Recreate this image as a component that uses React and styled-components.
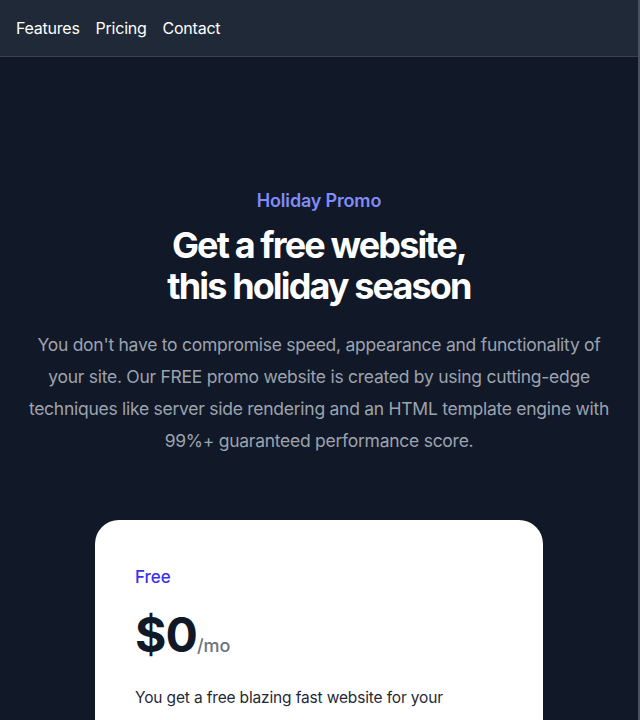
import React from 'react';
import styled, { createGlobalStyle } from 'styled-components';

const GlobalStyle = createGlobalStyle`
  html, body {
    margin: 0;
    padding: 0;
    background: #111827;
  }

  body {
    font-family: Inter, "Noto Sans", "Liberation Sans", sans-serif;
    -webkit-font-smoothing: antialiased;
  }

  * {
    box-sizing: border-box;
  }
`

const Page = styled.div`
  min-height: 100vh;
  background: #111827;
  border-right: 2px solid #4b5060;
`

const Nav = styled.nav`
  display: flex;
  align-items: center;
  gap: 16px;
  height: 57px;
  padding: 0 16px;
  background: #1f2937;
  border-bottom: 1px solid #374151;
`

const NavLink = styled.a`
  color: #fff;
  font-size: 16px;
  letter-spacing: -0.015em;
  text-decoration: none;
`

const Hero = styled.section`
  display: flex;
  flex-direction: column;
  align-items: center;
  padding: 130px 16px 0;
  text-align: center;
`

const Eyebrow = styled.p`
  margin: 0;
  color: #818cf8;
  font-size: 18px;
  line-height: 28px;
  font-weight: 600;
  letter-spacing: -0.01em;
`

const Heading = styled.h1`
  margin: 10px 0 0;
  color: #fff;
  font-size: 36px;
  line-height: 41px;
  font-weight: 700;
  letter-spacing: -0.052em;
`

const Lead = styled.p`
  max-width: 582px;
  margin: 22px 0 0;
  color: #9ca3af;
  font-size: 17.5px;
  line-height: 32px;
  letter-spacing: -0.015em;
`

const Card = styled.div`
  width: 448px;
  margin-top: 63px;
  padding: 43px 40px 40px;
  background: #fff;
  border-radius: 24px;
  text-align: left;
`

const Plan = styled.h3`
  margin: 0;
  color: #3d2ff0;
  font-size: 17px;
  line-height: 28px;
  font-weight: 500;
`

const Price = styled.p`
  display: flex;
  align-items: baseline;
  margin: 20px 0 0;
`

const Amount = styled.span`
  color: #111827;
  font-size: 48px;
  line-height: 1;
  font-weight: 700;
  letter-spacing: -0.02em;
`

const Period = styled.span`
  color: #6b7280;
  font-size: 18px;
  font-weight: 500;
`

const Description = styled.p`
  margin: 24px 0 0;
  color: #1f2937;
  font-size: 15.5px;
  line-height: 30px;
  letter-spacing: -0.01em;
`

export default function App() {
  return (
    <Page>
      <GlobalStyle />
      <Nav>
        <NavLink href="#">Features</NavLink>
        <NavLink href="#">Pricing</NavLink>
        <NavLink href="#">Contact</NavLink>
      </Nav>
      <Hero>
        <Eyebrow>Holiday Promo</Eyebrow>
        <Heading>
          Get a free website,
          <br />
          this holiday season
        </Heading>
        <Lead>
          You don't have to compromise speed, appearance and functionality of
          your site. Our FREE promo website is created by using cutting-edge
          techniques like server side rendering and an HTML template engine with
          99%+ guaranteed performance score.
        </Lead>
        <Card>
          <Plan>Free</Plan>
          <Price>
            <Amount>$0</Amount>
            <Period>/mo</Period>
          </Price>
          <Description>
            You get a free blazing fast website for your business, including
            hosting, SSL and a custom domain.
          </Description>
        </Card>
      </Hero>
    </Page>
  );
}
